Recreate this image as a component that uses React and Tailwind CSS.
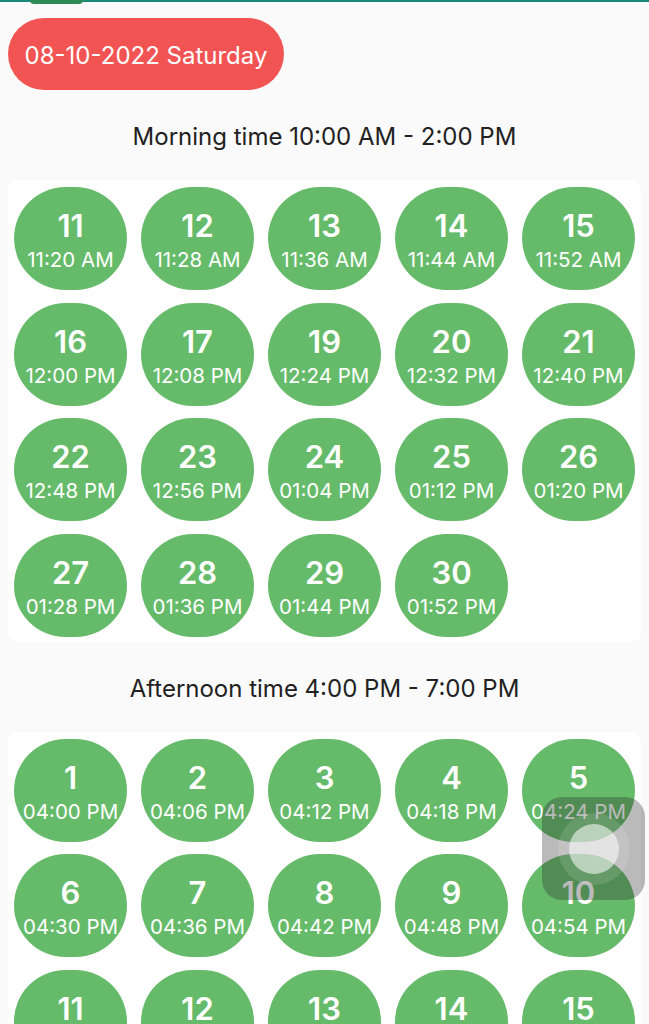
import React from 'react';

const morningSlots = [
  ['11', '11:20 AM'], ['12', '11:28 AM'], ['13', '11:36 AM'], ['14', '11:44 AM'], ['15', '11:52 AM'],
  ['16', '12:00 PM'], ['17', '12:08 PM'], ['19', '12:24 PM'], ['20', '12:32 PM'], ['21', '12:40 PM'],
  ['22', '12:48 PM'], ['23', '12:56 PM'], ['24', '01:04 PM'], ['25', '01:12 PM'], ['26', '01:20 PM'],
  ['27', '01:28 PM'], ['28', '01:36 PM'], ['29', '01:44 PM'], ['30', '01:52 PM']
];

const afternoonSlots = [
  ['1', '04:00 PM'], ['2', '04:06 PM'], ['3', '04:12 PM'], ['4', '04:18 PM'], ['5', '04:24 PM'],
  ['6', '04:30 PM'], ['7', '04:36 PM'], ['8', '04:42 PM'], ['9', '04:48 PM'], ['10', '04:54 PM'],
  ['11', '05:00 PM'], ['12', '05:06 PM'], ['13', '05:12 PM'], ['14', '05:18 PM'], ['15', '05:24 PM']
];

function Slot({ token, time }) {
  return (
    <div className="flex h-[103px] w-[113px] flex-col items-center rounded-full bg-[#66bb6a] pt-[22px] text-white">
      <span className="text-[31px] font-semibold leading-[34px]">{token}</span>
      <span className="mt-[5px] whitespace-nowrap text-[20.5px] leading-[24px]">{time}</span>
    </div>
  );
}

function Section({ title, slots }) {
  return (
    <div>
      <p className="pt-[33px] text-center text-[24px] leading-[28px] text-[#212121]">{title}</p>
      <div className="mx-[8px] mt-[29px] grid grid-cols-[repeat(5,113px)] gap-x-[14px] gap-y-[12.5px] rounded-[10px] bg-white pb-[5px] pl-[6px] pt-[7px]">
        {slots.map(([token, time], i) => (
          <Slot key={i} token={token} time={time} />
        ))}
      </div>
    </div>
  );
}

export default function App() {
  return (
    <div
      className="relative h-[1024px] overflow-hidden bg-[#fafafa]"
      style={{ fontFamily: 'Inter, "Noto Sans", sans-serif' }}
    >
      <div className="h-[2px] bg-[#1b8a7b]">
        <div className="ml-[30px] h-[4px] w-[53px] rounded-b-full bg-[#2e8b57]" />
      </div>

      <div className="ml-[8px] mt-[16px] flex h-[72px] w-[276px] items-center justify-center rounded-full bg-[#f25353] pt-[3px] text-[24px] text-white">
        08-10-2022 Saturday
      </div>

      <Section title="Morning time 10:00 AM - 2:00 PM" slots={morningSlots} />
      <Section title="Afternoon time 4:00 PM - 7:00 PM" slots={afternoonSlots} />

      <div className="absolute left-[542px] top-[797px] flex h-[103px] w-[103px] items-center justify-center rounded-[20px] bg-[rgba(40,40,40,0.32)]">
        <div className="flex h-[72px] w-[72px] items-center justify-center rounded-full bg-[rgba(255,255,255,0.12)]">
          <div className="h-[50px] w-[50px] rounded-full bg-[rgba(255,255,255,0.55)]" />
        </div>
      </div>
    </div>
  );
}
